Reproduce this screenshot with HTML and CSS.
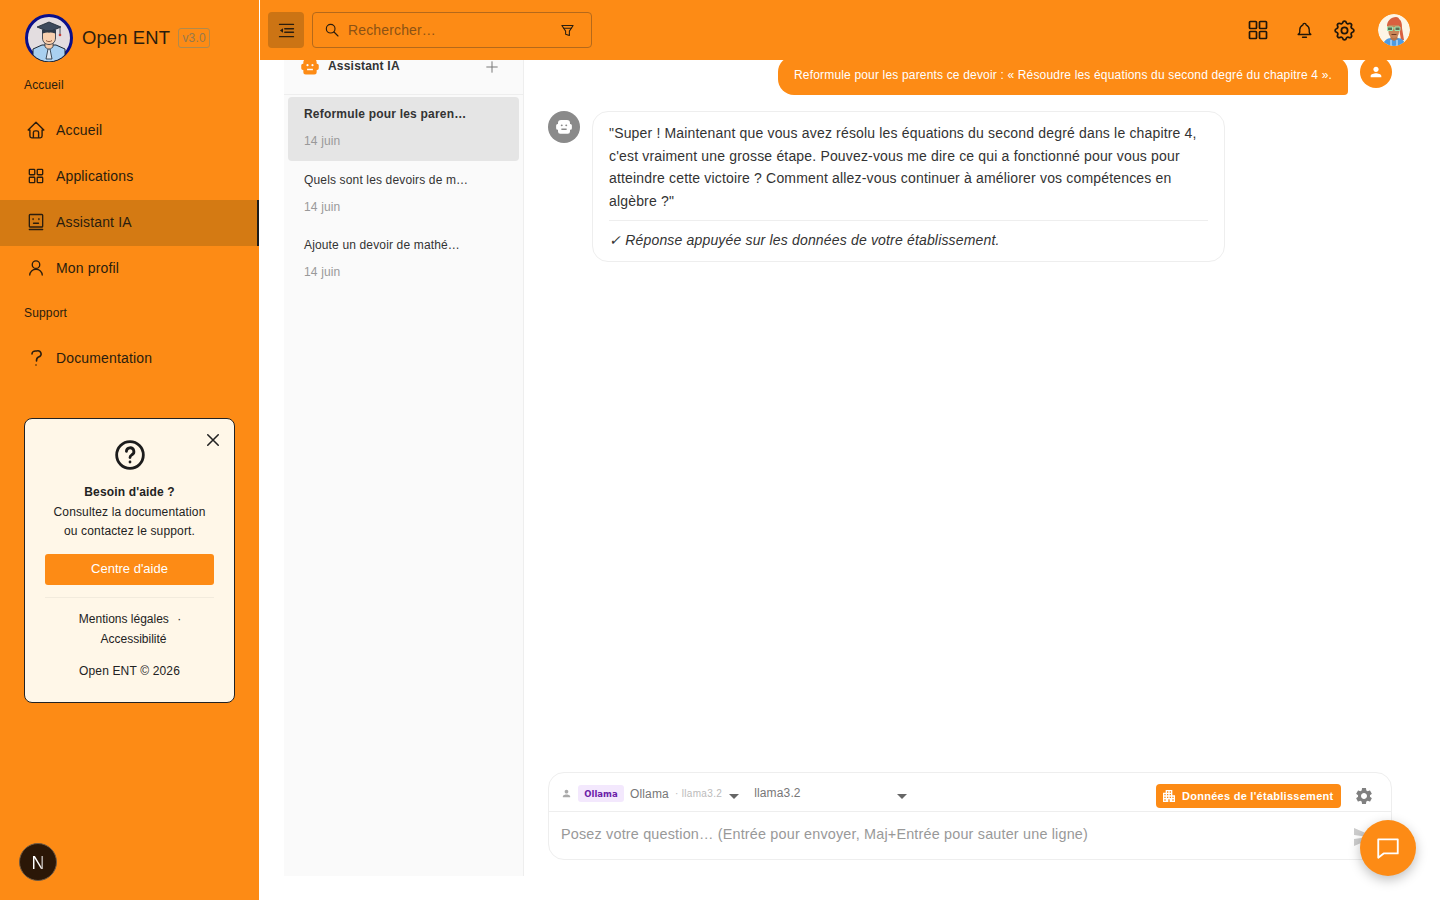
FILE: index.html
```html
<!DOCTYPE html>
<html lang="fr">
<head>
<meta charset="utf-8">
<title>Open ENT</title>
<link rel="stylesheet" href="styles.css">
</head>
<body>
<div class="app">
  <aside class="sidebar">
    <div class="brand">
      <svg class="logo" viewBox="0 0 48 48">
        <circle cx="24" cy="24" r="22.5" fill="#e3dde0" stroke="#0a0f8a" stroke-width="3"/>
        <path d="M8 41v-6l9-4h14l9 4v6a22 22 0 0 1-32 0z" fill="#a9d0f0" stroke="#1c2733" stroke-width="1"/>
        <path d="M20 28h8v5l-4 3-4-3z" fill="#f5c9a8" stroke="#1c2733" stroke-width=".7"/>
        <path d="M23 35h2l2 10h-6z" fill="#dfe6ee" stroke="#1c2733" stroke-width=".8"/>
        <path d="M17.500 16h13v8c0 4-3 6.500-6.500 6.500s-6.500-2.500-6.500-6.500z" fill="#f7cfae" stroke="#1c2733" stroke-width=".8"/>
        <path d="M12 13l12-5 12 5-12 5z" fill="#3d4a5c" stroke="#1c2733" stroke-width=".8"/>
        <path d="M17 16h14v3.500c-4-1.500-10-1.500-14 0z" fill="#2f3a48"/>
        <path d="M35 14v6" stroke="#1c2733" stroke-width=".8"/>
        <circle cx="35" cy="21" r="1.300" fill="#c2413b"/>
        <path d="M21 26.500c2 1.500 4 1.500 6 0" fill="none" stroke="#7a3b22" stroke-width=".8"/>
      </svg>
      <span class="brand-name">Open ENT</span>
      <span class="version">v3.0</span>
    </div>
    <div class="nav-label">Accueil</div>
    <nav class="nav">
      <a class="nav-item">
        <svg class="ico nav-ico" viewBox=".5 .5 23 23"><path d="M5 12H3l9-9 9 9h-2M5 12v7a2 2 0 0 0 2 2h10a2 2 0 0 0 2-2v-7M9 21v-6a2 2 0 0 1 2-2h2a2 2 0 0 1 2 2v6"/></svg>
        <span>Accueil</span>
      </a>
      <a class="nav-item">
        <svg class="ico nav-ico" viewBox="0 0 24 24"><rect x="4" y="4" width="6.500" height="6.500" rx=".8"/><rect x="13.500" y="4" width="6.500" height="6.500" rx=".8"/><rect x="4" y="13.500" width="6.500" height="6.500" rx=".8"/><rect x="13.500" y="13.500" width="6.500" height="6.500" rx=".8"/></svg>
        <span>Applications</span>
      </a>
      <a class="nav-item active">
        <svg class="ico nav-ico" viewBox="0 0 24 24"><rect x="4" y="3" width="16" height="15" rx="1"/><path d="M8.500 8v1M15.500 8v1M9 13.500h6M4 21h16"/></svg>
        <span>Assistant IA</span>
      </a>
      <a class="nav-item">
        <svg class="ico nav-ico" viewBox="0 0 24 24"><circle cx="12" cy="8" r="4.500"/><path d="M4.500 20.500c0-4 3.400-7 7.500-7s7.500 3 7.500 7"/></svg>
        <span>Mon profil</span>
      </a>
    </nav>
    <div class="nav-label support">Support</div>
    <nav class="nav doc-nav">
      <a class="nav-item">
        <svg class="ico nav-ico" viewBox="2 2 20 20"><path d="M8 8a3.500 3 0 0 1 3.500-3h1a3.500 3 0 0 1 2 6a3 4 0 0 0-2 4M12 19v.01"/></svg>
        <span>Documentation</span>
      </a>
    </nav>
    <section class="help">
      <svg class="ico help-close" viewBox="0 0 24 24"><path d="M5 5l14 14M19 5L5 19"/></svg>
      <svg class="ico help-ico" viewBox="0 0 24 24"><circle cx="12" cy="12" r="10"/><path d="M9.300 9.300a2.800 2.800 0 1 1 4 2.600c-.9.500-1.300 1-1.300 2M12 17.200v.1"/></svg>
      <div class="help-title">Besoin d'aide ?</div>
      <div class="help-line">Consultez la documentation</div>
      <div class="help-line">ou contactez le support.</div>
      <button class="help-btn">Centre d'aide</button>
      <div class="help-sep"></div>
      <div class="help-link">Mentions légales <span class="dot">·</span></div>
      <div class="help-link second">Accessibilité</div>
      <div class="help-copy">Open ENT © 2026</div>
    </section>
  </aside>

  <div class="main">
    <header class="topbar">
      <button class="toggle">
        <svg class="ico toggle-ico" viewBox="0 0 24 24"><path d="M4 5h16M10 10h10M10 14h10M4 19h16"/><path class="solid" d="M8 9.500v5L4.500 12z"/></svg>
      </button>
      <div class="search">
        <svg class="ico search-ico" viewBox="0 0 24 24"><circle cx="10" cy="10" r="6.500"/><path d="M15 15l6 6"/></svg>
        <span class="search-text">Rechercher…</span>
        <svg class="ico filter-ico" viewBox="0 0 24 24"><path d="M3 4h18l-6 9v7l-6-2v-5z"/><path d="M6 8.500h12"/></svg>
      </div>
      <div class="top-actions">
        <svg class="ico top-ico" viewBox="0 0 24 24"><rect x="3.500" y="3.500" width="7" height="7" rx=".8"/><rect x="13.500" y="3.500" width="7" height="7" rx=".8"/><rect x="3.500" y="13.500" width="7" height="7" rx=".8"/><rect x="13.500" y="13.500" width="7" height="7" rx=".8"/></svg>
        <svg class="ico bell-ico" viewBox="0 0 24 24"><path d="M10 5a2 2 0 1 1 4 0a7 7 0 0 1 4 6v3a4 4 0 0 0 2 3H4a4 4 0 0 0 2-3v-3a7 7 0 0 1 4-6M9.500 20.500h5"/></svg>
        <svg class="ico gear-ico" viewBox="0 0 24 24"><path d="M10.325 4.317c.426-1.756 2.924-1.756 3.350 0a1.724 1.724 0 0 0 2.573 1.066c1.543-.94 3.310.826 2.370 2.370a1.724 1.724 0 0 0 1.065 2.572c1.756.426 1.756 2.924 0 3.350a1.724 1.724 0 0 0-1.066 2.573c.94 1.543-.826 3.310-2.370 2.370a1.724 1.724 0 0 0-2.572 1.065c-.426 1.756-2.924 1.756-3.350 0a1.724 1.724 0 0 0-2.573-1.066c-1.543.94-3.310-.826-2.370-2.370a1.724 1.724 0 0 0-1.065-2.572c-1.756-.426-1.756-2.924 0-3.350a1.724 1.724 0 0 0 1.066-2.573c-.94-1.543.826-3.310 2.370-2.370c1 .608 2.296.07 2.572-1.065z"/><circle cx="12" cy="12" r="3"/></svg>
        <svg class="avatar" viewBox="0 0 32 32">
          <defs><clipPath id="av"><circle cx="16" cy="16" r="16"/></clipPath></defs>
          <g clip-path="url(#av)">
            <rect width="32" height="32" fill="#fdf5e6"/>
            <path d="M9 12c0-5 4-9 9-9 2 0 3 1 3 2 3 2 3 6 3 9l2 12h-3l-2-12H11z" fill="#d9603f"/>
            <path d="M5 32c0-5 4-8 8-8h7c4 0 7 3 7 8z" fill="#4f9be0"/>
            <path d="M12.500 20h7v5l-3.500 2-3.500-2z" fill="#b87348"/>
            <path d="M10.500 11h10.500v7c0 3-2.200 6-5.200 6s-5.300-3-5.300-6z" fill="#c98558"/>
            <path d="M9.500 13h5v3.500h-5zM17 13h5v3.500h-5zM14.500 14h2.500" fill="#5a6d55" stroke="#9be6b0" stroke-width="1"/>
            <path d="M13.500 20.500h5" stroke="#6e3b24" stroke-width="1"/>
            <path d="M13 26v6M19 26v6" stroke="#e5f1fb" stroke-width="1"/>
          </g>
        </svg>
      </div>
    </header>

    <div class="content">
      <section class="chat-list">
        <div class="list-head">
          <svg class="head-bot" viewBox="0 0 24 24"><path fill-rule="evenodd" d="M8 2.500h8a4 4 0 0 1 4 4V8h.5a2 2 0 0 1 2 2v3.500a2 2 0 0 1-2 2H20V18a3 3 0 0 1-3 3H7a3 3 0 0 1-3-3v-2.500h-.5a2 2 0 0 1-2-2V10a2 2 0 0 1 2-2H4V6.500a4 4 0 0 1 4-4zM9 8.500a1.300 1.300 0 1 0 0 2.600 1.300 1.300 0 0 0 0-2.600zm6 0a1.300 1.300 0 1 0 0 2.600 1.300 1.300 0 0 0 0-2.600zM8.500 14v2h7v-2z"/></svg>
          <span class="list-title">Assistant IA</span>
          <svg class="ico plus-ico" viewBox="0 0 24 24"><path d="M12 3v18M3 12h18"/></svg>
        </div>
        <div class="conv">
          <div class="conv-item current"><div class="conv-title">Reformule pour les paren…</div><div class="conv-date">14 juin</div></div>
          <div class="conv-item"><div class="conv-title">Quels sont les devoirs de m…</div><div class="conv-date">14 juin</div></div>
          <div class="conv-item"><div class="conv-title">Ajoute un devoir de mathé…</div><div class="conv-date">14 juin</div></div>
        </div>
      </section>

      <section class="chat">
        <div class="thread">
          <div class="msg-user">
            <div class="bubble-user">Reformule pour les parents ce devoir : « Résoudre les équations du second degré du chapitre 4 ».</div>
            <span class="round orange">
              <svg class="round-svg small" viewBox="0 0 24 24"><path d="M12 12c2.210 0 4-1.790 4-4s-1.790-4-4-4-4 1.790-4 4 1.790 4 4 4zm0 2c-2.670 0-8 1.340-8 4v2h16v-2c0-2.660-5.330-4-8-4z"/></svg>
            </span>
          </div>
          <div class="msg-bot">
            <span class="round gray">
              <svg class="round-svg" viewBox="0 0 24 24"><path fill-rule="evenodd" d="M8 2.500h8a4 4 0 0 1 4 4V8h.5a2 2 0 0 1 2 2v3.500a2 2 0 0 1-2 2H20V18a3 3 0 0 1-3 3H7a3 3 0 0 1-3-3v-2.500h-.5a2 2 0 0 1-2-2V10a2 2 0 0 1 2-2H4V6.500a4 4 0 0 1 4-4zM9 8.500a1.300 1.300 0 1 0 0 2.600 1.300 1.300 0 0 0 0-2.600zm6 0a1.300 1.300 0 1 0 0 2.600 1.300 1.300 0 0 0 0-2.600zM8.500 14v2h7v-2z"/></svg>
            </span>
            <div class="bubble-bot">
              <p class="answer">"Super ! Maintenant que vous avez résolu les équations du second degré dans le chapitre 4, c'est vraiment une grosse étape. Pouvez-vous me dire ce qui a fonctionné pour vous pour atteindre cette victoire ? Comment allez-vous continuer à améliorer vos compétences en algèbre ?"</p>
              <p class="source">✓ Réponse appuyée sur les données de votre établissement.</p>
            </div>
          </div>
        </div>

        <div class="composer">
          <div class="composer-top">
            <svg class="mini-user" viewBox="0 0 24 24"><path d="M12 12c2.210 0 4-1.790 4-4s-1.790-4-4-4-4 1.790-4 4 1.790 4 4 4zm0 2c-2.670 0-8 1.340-8 4v2h16v-2c0-2.660-5.330-4-8-4z"/></svg>
            <span class="tag">Ollama</span>
            <span class="provider">Ollama</span>
            <span class="model-note">· llama3.2</span>
            <span class="caret first"></span>
            <span class="model">llama3.2</span>
            <span class="caret second"></span>
            <button class="data-btn">
              <svg class="data-ico" viewBox="0 0 24 24"><path d="M17 11V3H7v4H3v14h8v-4h2v4h8V11h-4zM7 19H5v-2h2v2zm0-4H5v-2h2v2zm0-4H5V9h2v2zm4 4H9v-2h2v2zm0-4H9V9h2v2zm0-4H9V5h2v2zm4 8h-2v-2h2v2zm0-4h-2V9h2v2zm0-4h-2V5h2v2zm4 12h-2v-2h2v2zm0-4h-2v-2h2v2z"/></svg>
              Données de l'établissement
            </button>
            <svg class="set-ico" viewBox="0 0 24 24"><path d="M19.140 12.940c.04-.3.06-.61.06-.94 0-.32-.02-.64-.07-.94l2.030-1.580c.18-.14.23-.41.12-.61l-1.920-3.320c-.12-.22-.37-.29-.59-.22l-2.390.96c-.5-.38-1.030-.7-1.620-.94l-.36-2.540c-.04-.24-.24-.41-.48-.41h-3.840c-.24 0-.43.17-.47.41l-.36 2.540c-.59.24-1.130.57-1.620.94l-2.390-.96c-.22-.08-.47 0-.59.22L2.740 8.870c-.12.21-.08.47.12.61l2.030 1.580c-.05.3-.09.63-.09.94s.02.64.07.94l-2.030 1.580c-.18.14-.23.41-.12.61l1.920 3.320c.12.22.37.29.59.22l2.390-.96c.5.38 1.030.7 1.620.94l.36 2.540c.05.24.24.41.48.41h3.840c.24 0 .44-.17.47-.41l.36-2.540c.59-.24 1.130-.56 1.620-.94l2.390.96c.22.08.47 0 .59-.22l1.920-3.320c.12-.22.07-.47-.12-.61l-2.010-1.580zM12 15.600c-1.980 0-3.600-1.620-3.600-3.600s1.620-3.600 3.600-3.600 3.600 1.620 3.600 3.600-1.620 3.600-3.600 3.600z"/></svg>
          </div>
          <div class="composer-bottom">
            <span class="placeholder">Posez votre question… (Entrée pour envoyer, Maj+Entrée pour sauter une ligne)</span>
            <svg class="send-ico" viewBox="0 0 24 24"><path d="M2.010 21L23 12 2.010 3 2 10l15 2-15 2z"/></svg>
          </div>
        </div>
      </section>
    </div>
  </div>
</div>

<div class="next-badge"><span class="next-n">N</span></div>
<button class="fab">
  <svg class="ico fab-ico" viewBox="0 0 24 24"><path d="M3 4h18v13H8l-5 4z"/></svg>
</button>
</body>
</html>
```
FILE: styles.css
```css
* { box-sizing: border-box; }
html, body { margin: 0; height: 100%; }
body {
  font-family: "Liberation Sans", Arial, sans-serif;
  background: #fff;
  color: #222;
  overflow: hidden;
  letter-spacing: .15px;
}
button { font-family: inherit; border: 0; padding: 0; letter-spacing: inherit; }
p { margin: 0; }
.app { display: flex; height: 900px; }

.ico { fill: none; stroke: currentColor; stroke-width: 1.700; stroke-linecap: round; stroke-linejoin: round; flex: none; }
.solid { fill: currentColor; stroke: none; }

/* Sidebar */
.sidebar {
  width: 259px;
  margin-right: 1px;
  background: #fd8b15;
  color: #2a1d0e;
  flex: none;
  display: flex;
  flex-direction: column;
}
.brand { display: flex; align-items: center; height: 76px; padding-left: 25px; }
.logo { width: 48px; height: 48px; flex: none; }
.brand-name { margin-left: 9px; font-size: 18.400px; color: #2a1d0e; }
.version {
  margin-left: 8px;
  width: 32px;
  height: 20px;
  border: 1px solid #b08a4c;
  border-radius: 3px;
  color: #97794c;
  font-size: 12px;
  line-height: 18px;
  text-align: center;
}
.nav-label { height: 18px; line-height: 18px; padding-left: 24px; font-size: 12px; }
.nav { margin-top: 14px; display: flex; flex-direction: column; }
.nav-item { display: flex; align-items: center; height: 46px; padding: 0 0 2px 26px; font-size: 14px; gap: 10px; }
.nav-ico { width: 20px; height: 20px; stroke-width: 1.600; }
.nav-item.active { background: #d47a13; border-right: 2px solid #1c1c1c; }
.support { margin-top: 12px; }
.doc-nav { margin-top: 14px; }

/* Help card */
.help {
  position: relative;
  margin: 36px 0 0 24px;
  width: 211px;
  height: 285px;
  background: #fff7e8;
  border: 1px solid #222;
  border-radius: 8px;
  display: flex;
  flex-direction: column;
  align-items: center;
  padding-top: 20px;
  color: #222;
  font-size: 12px;
}
.help-close { position: absolute; top: 12px; right: 12px; width: 18px; height: 18px; stroke-width: 2.100; }
.help-ico { width: 32px; height: 32px; stroke-width: 2.100; color: #1c1c1c; }
.help-title { margin-top: 11px; height: 21px; line-height: 20px; font-weight: 700; }
.help-line { height: 19px; line-height: 19px; }
.help-btn {
  margin-top: 13px;
  width: 169px;
  height: 31px;
  flex: none;
  padding-bottom: 2px;
  border-radius: 3px;
  background: #fd8b15;
  color: #fff;
  font-size: 13px;
  letter-spacing: 0;
}
.help-sep { margin-top: 12px; width: 169px; height: 1px; background: #f2ebdd; flex: none; }
.help-link { height: 20px; line-height: 20px; margin-top: 11px; padding-left: 1px; letter-spacing: 0; }
.help-link .dot { margin-left: 5px; }
.help-link.second { margin-top: 0; padding-left: 8px; }
.help-copy { margin-top: 12px; height: 20px; line-height: 20px; }

/* Main */
.main { flex: 1; min-width: 0; display: flex; flex-direction: column; }
.topbar {
  flex: none;
  height: 60px;
  background: #fd8b15;
  display: flex;
  align-items: center;
  padding-left: 8px;
  position: relative;
  z-index: 2;
}
.toggle { width: 36px; height: 36px; border-radius: 4px; background: #cc7414; color: #2a1d0e; display: flex; align-items: center; justify-content: center; }
.toggle-ico { width: 21px; height: 21px; stroke-width: 1.500; }
.search {
  margin-left: 8px;
  width: 280px;
  height: 36px;
  border: 1px solid #b5691a;
  border-radius: 4px;
  display: flex;
  align-items: center;
  padding: 0 16px 0 11px;
  color: #2a1d0e;
}
.search-ico { width: 16px; height: 16px; }
.search-text { margin-left: 8px; flex: 1; font-size: 14px; color: #8c5214; }
.filter-ico { width: 15px; height: 15px; }
.top-actions { margin-left: auto; display: flex; align-items: center; padding-right: 30px; color: #20160a; }
.top-ico { width: 24px; height: 24px; }
.bell-ico { width: 19px; height: 19px; margin-left: 24.500px; }
.gear-ico { width: 25px; height: 25px; margin-left: 18px; }
.avatar { width: 32px; height: 32px; margin-left: 21.500px; border-radius: 50%; flex: none; }

.content { flex: 1; min-height: 0; display: flex; padding: 0 24px 24px; }

/* Conversation list */
.chat-list { width: 240px; flex: none; background: #fafafa; border-right: 1px solid #eee; display: flex; flex-direction: column; }
.list-head {
  flex: none;
  height: 35px;
  display: flex;
  align-items: flex-start;
  border-bottom: 1px solid #eee;
  padding: 0 24px 0 16px;
  overflow: hidden;
}
.head-bot { width: 20px; height: 20px; margin-top: -3px; fill: #fd8b15; flex: none; }
.list-title { margin-left: 8px; margin-top: -1px; font-size: 12px; font-weight: 700; line-height: 14px; color: #333; letter-spacing: .2px; }
.plus-ico { margin-left: auto; width: 14px; height: 14px; color: #777; }
.conv { padding: 2px 4px; display: flex; flex-direction: column; gap: 1.500px; }
.conv-item { height: 64px; border-radius: 4px; padding: 9px 16px 0; }
.conv-item.current { background: #e5e5e5; }
.conv-title { font-size: 12px; line-height: 16px; color: #333; white-space: nowrap; }
.current .conv-title { font-weight: 700; letter-spacing: .2px; }
.conv-date { margin-top: 11px; font-size: 12px; line-height: 16px; color: #999; }

/* Chat */
.chat { flex: 1; min-width: 0; display: flex; flex-direction: column; padding: 0 24px; }
.thread { flex: 1; min-height: 0; }
.msg-user { display: flex; justify-content: flex-end; gap: 12px; margin-top: -4px; }
.bubble-user {
  height: 39px;
  background: #fd8b15;
  color: #fff;
  font-size: 12px;
  line-height: 39px;
  letter-spacing: .17px;
  padding: 0 16px;
  border-radius: 16px 16px 4px 16px;
}
.round { width: 32px; height: 32px; border-radius: 50%; display: flex; align-items: center; justify-content: center; flex: none; }
.round.orange { background: #fd8b15; }
.round.gray { background: #8a8a8a; }
.round-svg { width: 18px; height: 18px; fill: #fff; }
.round-svg.small { width: 16px; height: 16px; }
.msg-bot { display: flex; gap: 12px; margin-top: 16px; }
.bubble-bot {
  width: 633px;
  height: 151px;
  border: 1px solid #eee;
  border-radius: 16px;
  padding: 10.400px 16px 0;
  color: #333;
  font-size: 14px;
  line-height: 22.400px;
  letter-spacing: .17px;
}
.answer { padding-bottom: 7.600px; border-bottom: 1px solid #eee; }
.source { margin-top: 8px; font-style: italic; }

/* Composer */
.composer { flex: none; height: 88px; margin-bottom: 16px; border: 1px solid #eee; border-radius: 16px; display: flex; flex-direction: column; }
.composer-top { flex: none; height: 39px; border-bottom: 1px solid #eee; display: flex; align-items: center; padding: 3px 17px 0 12px; }
.mini-user { width: 11px; height: 11px; fill: #aaa; flex: none; }
.tag { margin-left: 6px; width: 46px; height: 17px; border-radius: 3px; background: #f3e8fd; color: #6b21a8; font-family: "DejaVu Sans", sans-serif; font-size: 8.500px; font-weight: 700; line-height: 18px; text-align: center; letter-spacing: 0; }
.provider { margin-left: 6px; font-size: 12px; color: #777; }
.model-note { margin-left: 6px; font-size: 10px; color: #bbb; letter-spacing: .33px; }
.caret { width: 0; height: 0; border-left: 5px solid transparent; border-right: 5px solid transparent; border-top: 5px solid #666; margin-top: 6px; flex: none; }
.caret.first { margin-left: 7px; }
.model { margin-left: 15px; width: 143px; font-size: 12px; color: #777; margin-top: -1px; }
.data-btn {
  margin-left: auto;
  margin-top: 5px;
  width: 185px;
  height: 24px;
  border-radius: 4px;
  background: #fd8b15;
  color: #fff;
  font-size: 11px;
  font-weight: 700;
  letter-spacing: .27px;
  display: flex;
  align-items: center;
  gap: 5px;
  padding-left: 5px;
  white-space: nowrap;
}
.data-ico { width: 16px; height: 16px; fill: #fff; flex: none; }
.set-ico { margin-left: 13px; margin-top: 5px; width: 20px; height: 20px; fill: #808080; flex: none; }
.composer-bottom { flex: 1; display: flex; align-items: flex-start; padding: 14px 15px 0 12px; }
.placeholder { flex: 1; font-size: 14.400px; line-height: 17px; letter-spacing: .18px; color: #999; white-space: nowrap; }
.send-ico { width: 24px; height: 24px; margin-top: -1px; fill: #ccc; flex: none; }

/* Floating */
.next-badge {
  position: absolute;
  left: 19px;
  top: 843px;
  width: 38px;
  height: 38px;
  border-radius: 50%;
  background: #2b1707;
  border: 1px solid #6d5a45;
  font-size: 18px;
  line-height: 38px;
  text-align: center;
  letter-spacing: 0;
}
.next-n {
  background: linear-gradient(90deg, #fff 62%, rgba(255, 255, 255, .25));
  -webkit-background-clip: text;
  background-clip: text;
  color: transparent;
}
.fab {
  position: absolute;
  left: 1360px;
  top: 820px;
  width: 56px;
  height: 56px;
  border-radius: 50%;
  background: #fd8b15;
  box-shadow: 0 4px 12px rgba(0, 0, 0, .25);
  color: #fff;
  display: flex;
  align-items: center;
  justify-content: center;
}
.fab-ico { width: 26px; height: 26px; stroke-width: 1.700; }
```
